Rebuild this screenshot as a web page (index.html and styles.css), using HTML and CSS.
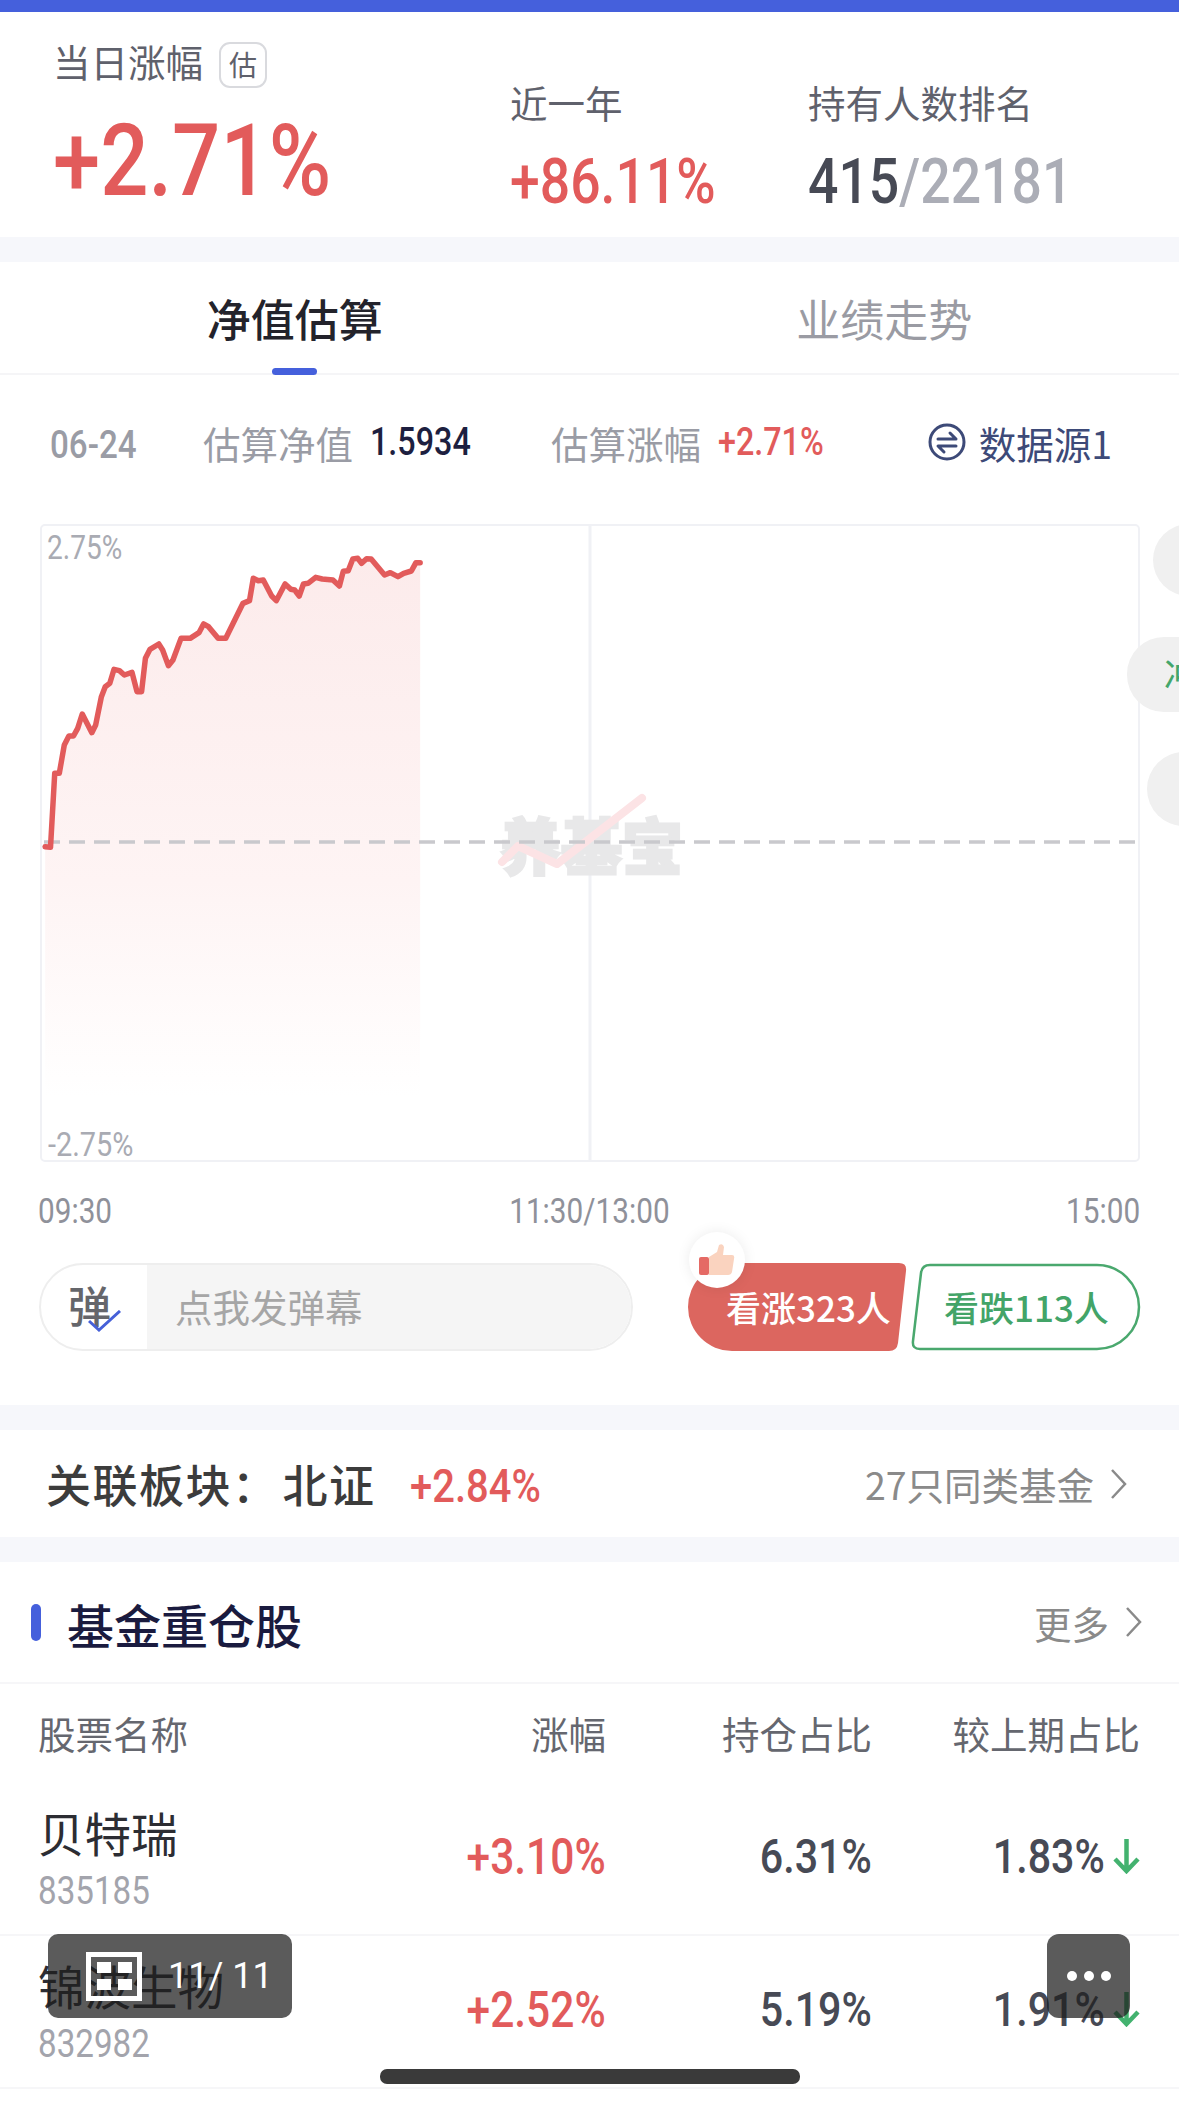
FILE: index.html
```html
<!DOCTYPE html>
<html lang="zh-CN">
<head>
    <meta charset="UTF-8">
    <meta name="viewport" content="width=device-width, initial-scale=1.0">
    <title>基金详情</title>
    <link rel="stylesheet" href="styles.css">
</head>
<body>
    <div class="page">
        <div class="top-bar"></div>

        <!-- 顶部数据 -->
        <div class="summary">
            <div class="stat stat-main">
                <div class="stat-label"><span class="stat-text">当日涨幅</span><span class="tag">估</span></div>
                <div class="stat-big num red">+2.71%</div>
            </div>
            <div class="stat stat-year">
                <div class="stat-label">近一年</div>
                <div class="stat-value num red">+86.11%</div>
            </div>
            <div class="stat">
                <div class="stat-label">持有人数排名</div>
                <div class="stat-value num"><span class="dark">415</span><span class="light">/22181</span></div>
            </div>
        </div>
        <div class="band"></div>

        <!-- 净值估算 -->
        <div class="tabs">
            <div class="tab active">净值估算</div>
            <div class="tab">业绩走势</div>
        </div>

        <div class="info">
            <div class="info-date num">06-24</div>
            <div class="info-group">
                <span class="info-label">估算净值</span>
                <span class="num info-nav">1.5934</span>
            </div>
            <div class="info-group">
                <span class="info-label">估算涨幅</span>
                <span class="num info-pct red">+2.71%</span>
            </div>
            <div class="info-source">
                <svg class="source-icon" viewBox="0 0 38 38">
                    <circle cx="19" cy="19" r="17" fill="none" stroke="#3d4a78" stroke-width="3"/>
                    <path d="M10 16H28L22 10M28 23H10L16 29" fill="none" stroke="#3d4a78" stroke-width="3" stroke-linecap="round" stroke-linejoin="round"/>
                </svg>
                <span>数据源1</span>
            </div>
        </div>

        <div class="chart">
            <svg class="chart-svg" viewBox="42 526 1096 634">
                <defs>
                    <linearGradient id="areaFill" x1="0" y1="0" x2="0" y2="1">
                        <stop offset="0" stop-color="#fcebeb"/>
                        <stop offset="0.6" stop-color="#fef4f4"/>
                        <stop offset="1" stop-color="#ffffff"/>
                    </linearGradient>
                </defs>
                <line x1="590" y1="526" x2="590" y2="1160" stroke="#f0f1f5" stroke-width="3"/>
                <polygon transform="translate(0 510) scale(.38265 .33333)" fill="url(#areaFill)" points="118,1010 132,1012 143,790 155,790 168,705 180,678 192,678 203,655 215,612 240,668 250,645 265,560 275,530 287,520 298,478 312,482 325,495 345,487 358,545 370,545 380,445 392,418 415,402 425,420 440,467 452,450 473,385 497,385 520,368 532,342 545,350 570,385 590,385 635,280 652,272 662,205 675,212 688,210 710,258 722,272 745,222 760,238 770,240 782,258 793,222 805,220 825,202 842,207 870,210 887,228 897,184 910,182 922,147 935,145 945,160 958,146 970,147 1005,195 1020,188 1040,200 1055,190 1075,183 1087,158 1098,158 1098,1760 118,1760"/>
                <text class="watermark" x="500" y="870">养基宝</text>
                <path d="M502 862L518 846L557 864L642 798" fill="none" stroke="#fce3e5" stroke-width="8" stroke-linecap="round" stroke-linejoin="round"/>
                <line x1="44" y1="842" x2="1136" y2="842" stroke="#c9c9cd" stroke-width="3.500" stroke-dasharray="16 9"/>
                <polyline transform="translate(0 510) scale(.38265 .33333)" fill="none" stroke="#e25b5b" stroke-width="5.500" stroke-linecap="round" stroke-linejoin="round" vector-effect="non-scaling-stroke" points="118,1010 132,1012 143,790 155,790 168,705 180,678 192,678 203,655 215,612 240,668 250,645 265,560 275,530 287,520 298,478 312,482 325,495 345,487 358,545 370,545 380,445 392,418 415,402 425,420 440,467 452,450 473,385 497,385 520,368 532,342 545,350 570,385 590,385 635,280 652,272 662,205 675,212 688,210 710,258 722,272 745,222 760,238 770,240 782,258 793,222 805,220 825,202 842,207 870,210 887,228 897,184 910,182 922,147 935,145 945,160 958,146 970,147 1005,195 1020,188 1040,200 1055,190 1075,183 1087,158 1098,158"/>
            </svg>
            <span class="chart-max num">2.75%</span>
            <span class="chart-min num">-2.75%</span>
        </div>

        <div class="side-pill pill-one"></div>
        <div class="side-pill pill-two">冲</div>
        <div class="side-pill pill-three"></div>

        <div class="axis">
            <span class="num axis-start">09:30</span>
            <span class="num axis-mid">11:30/13:00</span>
            <span class="num axis-end">15:00</span>
        </div>

        <div class="actions">
            <div class="danmu">
                <div class="danmu-icon">
                    <span>弹</span>
                    <svg class="danmu-check" viewBox="0 0 33 22">
                        <path d="M1 11L11 20L32 1" fill="none" stroke="#4660d8" stroke-width="3"/>
                    </svg>
                </div>
                <div class="danmu-input">点我发弹幕</div>
            </div>
            <div class="vote">
                <div class="vote-btn vote-up">
                    <svg class="vote-bg" viewBox="0 0 219 88">
                        <path d="M44 0H211Q219 0 218 8L210 80Q209 88 201 88H44A44 44 0 0 1 44 0Z" fill="#dc665f"/>
                    </svg>
                    <span>看涨323人</span>
                </div>
                <div class="vote-btn vote-down">
                    <svg class="vote-bg" viewBox="0 0 231 88">
                        <path d="M20 2H187A42 42 0 0 1 187 86H10Q2 86 3 78L11 10Q12 2 20 2Z" fill="#fff" stroke="#4aa86e" stroke-width="2.500"/>
                    </svg>
                    <span>看跌113人</span>
                </div>
                <div class="thumb">
                    <svg viewBox="0 0 36 32" width="36" height="32">
                        <rect x="0" y="13" width="10" height="18" rx="2" fill="#e56a65"/>
                        <path d="M10 13L18 8L20 1Q24 -1 25 3L24 11H33Q36 11 35 15L33 28Q32 31 29 31H10Z" fill="#fad3bf"/>
                    </svg>
                </div>
            </div>
        </div>
        <div class="band"></div>

        <!-- 关联板块 -->
        <div class="related">
            <div class="related-name">关联板块：<span class="related-sector">北证</span></div>
            <div class="related-pct num red">+2.84%</div>
            <div class="link">
                <span>27只同类基金</span>
                <svg class="chevron" viewBox="0 0 18 32"><path d="M2 2L15 16L2 30" fill="none" stroke="#8a8a8a" stroke-width="2.500"/></svg>
            </div>
        </div>
        <div class="band"></div>

        <!-- 基金重仓股 -->
        <div class="holdings-head">
            <i class="mark"></i>
            <h3 class="holdings-title">基金重仓股</h3>
            <div class="link link-more">
                <span>更多</span>
                <svg class="chevron" viewBox="0 0 18 32"><path d="M2 2L15 16L2 30" fill="none" stroke="#8a8a8a" stroke-width="2.500"/></svg>
            </div>
        </div>

        <div class="row row-head">
            <div>股票名称</div>
            <div class="cell-right">涨幅</div>
            <div class="cell-right">持仓占比</div>
            <div class="cell-right">较上期占比</div>
        </div>

        <div class="row row-stock">
            <div>
                <div class="stock-name">贝特瑞</div>
                <div class="stock-code num">835185</div>
            </div>
            <div class="cell-right"><span class="num cell-num red">+3.10%</span></div>
            <div class="cell-right"><span class="num cell-num">6.31%</span></div>
            <div class="cell-right cell-change">
                <span class="num cell-num">1.83%</span>
                <svg class="arrow" viewBox="0 0 27 36"><path d="M13.500 1V33M2 21L13.500 33L25 21" fill="none" stroke="#43b26f" stroke-width="4.500"/></svg>
            </div>
        </div>

        <div class="row row-stock">
            <div>
                <div class="stock-name">锦波生物</div>
                <div class="stock-code num">832982</div>
            </div>
            <div class="cell-right"><span class="num cell-num red">+2.52%</span></div>
            <div class="cell-right"><span class="num cell-num">5.19%</span></div>
            <div class="cell-right cell-change">
                <span class="num cell-num">1.91%</span>
                <svg class="arrow" viewBox="0 0 27 36"><path d="M13.500 1V33M2 21L13.500 33L25 21" fill="none" stroke="#43b26f" stroke-width="4.500"/></svg>
            </div>
        </div>

        <!-- 悬浮按钮 -->
        <div class="float-pages">
            <svg class="pages-icon" viewBox="0 0 56 49">
                <rect x="2.500" y="2.500" width="51" height="44" fill="none" stroke="#fff" stroke-width="5"/>
                <path d="M11 10H25V21H11ZM32 10H46V21H32ZM11 27H25V38H11ZM32 27H46V38H32Z" fill="#fff"/>
            </svg>
            <span class="pages-text">11/ 11</span>
        </div>
        <div class="float-more"><i></i><i></i><i></i></div>
        <div class="home-bar"></div>
    </div>
</body>
</html>
```

FILE: styles.css
```css
* {
    box-sizing: border-box;
}
body {
    margin: 0;
    background: #fff;
    font-family: "Noto Sans CJK SC", sans-serif;
    color: #3d3f4a;
}
.page {
    position: relative;
    width: 1179px;
    height: 2108px;
    overflow: hidden;
    background: #fff;
}
.num {
    display: inline-block;
    font-family: Roboto, sans-serif;
    font-weight: 500;
    transform: scaleX(.85);
    transform-origin: left center;
    white-space: nowrap;
}
.red {
    color: #e25b5b;
}
.top-bar {
    height: 12px;
    background: #4560dc;
}
.band {
    height: 25px;
    background: #f6f7fb;
}

/* summary */
.summary {
    display: flex;
    height: 225px;
    padding-left: 53px;
}
.stat {
    padding-top: 67px;
}
.stat-main {
    width: 457px;
    padding-top: 30px;
}
.stat-year {
    width: 298px;
}
.stat-label {
    display: flex;
    align-items: center;
    height: 46px;
    font-size: 37.500px;
    line-height: 46px;
    color: #5f616c;
}
.stat-text {
    padding-bottom: 8px;
}
.tag {
    width: 48px;
    height: 46px;
    margin-left: 16px;
    border: 2px solid #d9dade;
    border-radius: 11px;
    font-size: 28px;
    line-height: 40px;
    text-align: center;
}
.stat-big {
    display: block;
    margin-top: 23px;
    font-size: 100px;
    line-height: 100px;
}
.stat-value {
    display: block;
    margin-top: 25px;
    font-size: 63px;
    line-height: 64px;
}
.dark {
    color: #474a55;
}
.light {
    color: #abadb6;
}

/* tabs */
.tabs {
    display: flex;
    height: 113px;
    border-bottom: 2px solid #f5f5f7;
}
.tab {
    position: relative;
    flex: 1;
    padding-top: 26px;
    font-size: 44px;
    line-height: 60px;
    text-align: center;
    color: #9a9ba3;
}
.tab.active {
    font-weight: 500;
    color: #23232b;
}
.tab.active::after {
    content: "";
    position: absolute;
    left: 272px;
    bottom: -2px;
    width: 45px;
    height: 7px;
    border-radius: 4px;
    background: #4560dc;
}

/* info row */
.info {
    display: flex;
    align-items: center;
    height: 149px;
    padding: 0 67px 15px 50px;
    font-size: 37.500px;
}
.info-date {
    width: 153px;
    padding-top: 5px;
    font-size: 39px;
    color: #9a9ca5;
}
.info-group {
    display: flex;
    align-items: center;
    width: 348px;
    gap: 17px;
}
.info-label {
    color: #9a9ca5;
}
.info-nav {
    font-size: 38px;
    color: #1d1f40;
}
.info-pct {
    font-size: 38px;
}
.info-source {
    display: flex;
    align-items: center;
    gap: 13px;
    margin-left: auto;
    color: #3d4a78;
}
.source-icon {
    width: 38px;
    height: 38px;
}

/* chart */
.chart {
    position: relative;
    width: 1100px;
    height: 638px;
    margin-left: 40px;
    border: 2px solid #f0f1f5;
    border-radius: 5px;
}
.chart-svg {
    display: block;
    width: 1096px;
    height: 634px;
}
.watermark {
    font-size: 61px;
    font-weight: 900;
    fill: #e8e8e9;
    stroke: #e8e8e9;
    stroke-width: 2.500;
}
.chart-max, .chart-min {
    position: absolute;
    left: 5px;
    font-size: 33px;
    line-height: 34px;
    font-weight: 400;
    color: #a9abb3;
}
.chart-max {
    top: 5px;
}
.chart-min {
    bottom: -1px;
    left: 6px;
    font-size: 34px;
}
.side-pill {
    position: absolute;
    left: 1153px;
    top: 524px;
    width: 120px;
    height: 72px;
    border-radius: 37px;
    background: #f0f0f0;
}
.pill-two {
    left: 1127px;
    top: 637px;
    height: 75px;
    padding: 16px 0 0 37px;
    font-size: 36px;
    line-height: 40px;
    color: #44a66b;
}
.pill-three {
    left: 1147px;
    top: 752px;
    height: 74px;
}

/* axis */
.axis {
    display: flex;
    justify-content: space-between;
    margin-top: 35px;
    padding: 0 39px 0 38px;
    font-size: 35px;
    line-height: 30px;
    color: #8f919a;
}
.axis .num {
    font-weight: 400;
}
.axis-start {
    width: 88px;
}
.axis-mid {
    transform-origin: center;
}
.axis-end {
    transform-origin: right center;
}

/* danmu + vote */
.actions {
    display: flex;
    justify-content: space-between;
    height: 142px;
    margin-top: 36px;
    padding: 0 38px 54px 39px;
}
.danmu {
    display: flex;
    width: 594px;
    height: 88px;
    overflow: hidden;
    border: 2px solid #eeeeee;
    border-radius: 44px;
}
.danmu-icon {
    position: relative;
    width: 106px;
    padding-left: 27px;
    font-size: 43px;
    font-weight: 500;
    line-height: 78px;
    color: #65666b;
}
.danmu-check {
    position: absolute;
    left: 47px;
    top: 45px;
    width: 33px;
    height: 22px;
}
.danmu-input {
    flex: 1;
    padding-left: 28px;
    background: #f5f5f5;
    font-size: 37.500px;
    line-height: 82px;
    color: #a6a6a6;
}
.vote {
    position: relative;
    display: flex;
    gap: 3px;
}
.vote-btn {
    position: relative;
    height: 88px;
    font-size: 35px;
    font-weight: 500;
    line-height: 88px;
    white-space: nowrap;
}
.vote-btn span {
    position: relative;
}
.vote-bg {
    position: absolute;
    left: 0;
    top: 0;
    width: 100%;
    height: 100%;
}
.vote-up {
    width: 219px;
    padding-left: 38px;
    color: #fff;
}
.vote-down {
    width: 231px;
    padding-left: 34px;
    color: #43a468;
}
.thumb {
    position: absolute;
    left: 1px;
    top: -31px;
    display: flex;
    align-items: center;
    justify-content: center;
    width: 56px;
    height: 56px;
    border-radius: 50%;
    background: #fff;
    box-shadow: 0 0 14px rgba(0, 0, 0, 0.08);
}

/* related */
.related {
    display: flex;
    align-items: center;
    height: 107px;
    padding: 0 51px 0 46px;
}
.related-name {
    width: 364px;
    font-size: 45px;
    font-weight: 500;
    letter-spacing: 1.500px;
    color: #3c3c3c;
}
.related-sector {
    margin-left: 4px;
}
.related-pct {
    padding-top: 3px;
    font-size: 47px;
}
.link {
    display: flex;
    align-items: center;
    gap: 16px;
    margin-left: auto;
    font-size: 37.500px;
    color: #8a8a8a;
}
.chevron {
    width: 18px;
    height: 32px;
}

/* holdings */
.holdings-head {
    display: flex;
    align-items: center;
    height: 122px;
    padding: 0 36px 0 31px;
    border-bottom: 2px solid #f6f6f8;
}
.mark {
    width: 10px;
    height: 37px;
    margin-right: 26px;
    border-radius: 5px;
    background: #4560dc;
}
.holdings-title {
    margin: 0 0 -2px;
    font-size: 47px;
    font-weight: 500;
    color: #1a1b3f;
}
.row {
    display: grid;
    grid-template-columns: 368px 200px 266px 268px;
    padding-left: 38px;
}
.row-head {
    align-items: center;
    height: 99px;
    padding-bottom: 2px;
    font-size: 37.500px;
    color: #65676f;
}
.row-stock {
    align-items: center;
    height: 153px;
    padding-bottom: 6px;
    border-bottom: 2px solid #f6f6f8;
}
.cell-right {
    text-align: right;
}
.stock-name {
    padding-top: 6px;
    font-size: 46.500px;
    line-height: 50px;
    color: #2c2d33;
}
.stock-code {
    display: block;
    margin-top: 14px;
    font-size: 39px;
    font-weight: 400;
    line-height: 40px;
    color: #a3a4ac;
}
.cell-num {
    padding-top: 2px;
    font-size: 48.500px;
    color: #474a55;
    transform-origin: right center;
}
.cell-num.red {
    font-size: 50px;
    color: #e25b5b;
}
.cell-change {
    display: flex;
    align-items: center;
    justify-content: flex-end;
    gap: 8px;
}
.arrow {
    width: 27px;
    height: 36px;
}

/* floating */
.float-pages {
    position: absolute;
    left: 48px;
    top: 1934px;
    display: flex;
    align-items: center;
    width: 244px;
    height: 84px;
    padding-left: 38px;
    border-radius: 10px;
    background: rgba(30, 30, 30, 0.73);
}
.pages-icon {
    width: 56px;
    height: 49px;
}
.pages-text {
    margin-left: 26px;
    font-family: Roboto, sans-serif;
    font-size: 36px;
    color: #fff;
}
.float-more {
    position: absolute;
    left: 1047px;
    top: 1934px;
    display: flex;
    align-items: center;
    justify-content: center;
    gap: 7px;
    width: 83px;
    height: 84px;
    border-radius: 12px;
    background: rgba(30, 30, 30, 0.73);
}
.float-more i {
    width: 10px;
    height: 10px;
    border-radius: 50%;
    background: #fff;
}
.home-bar {
    position: absolute;
    left: 380px;
    top: 2069px;
    width: 420px;
    height: 15px;
    border-radius: 7px;
    background: #3a3a3a;
}
```
